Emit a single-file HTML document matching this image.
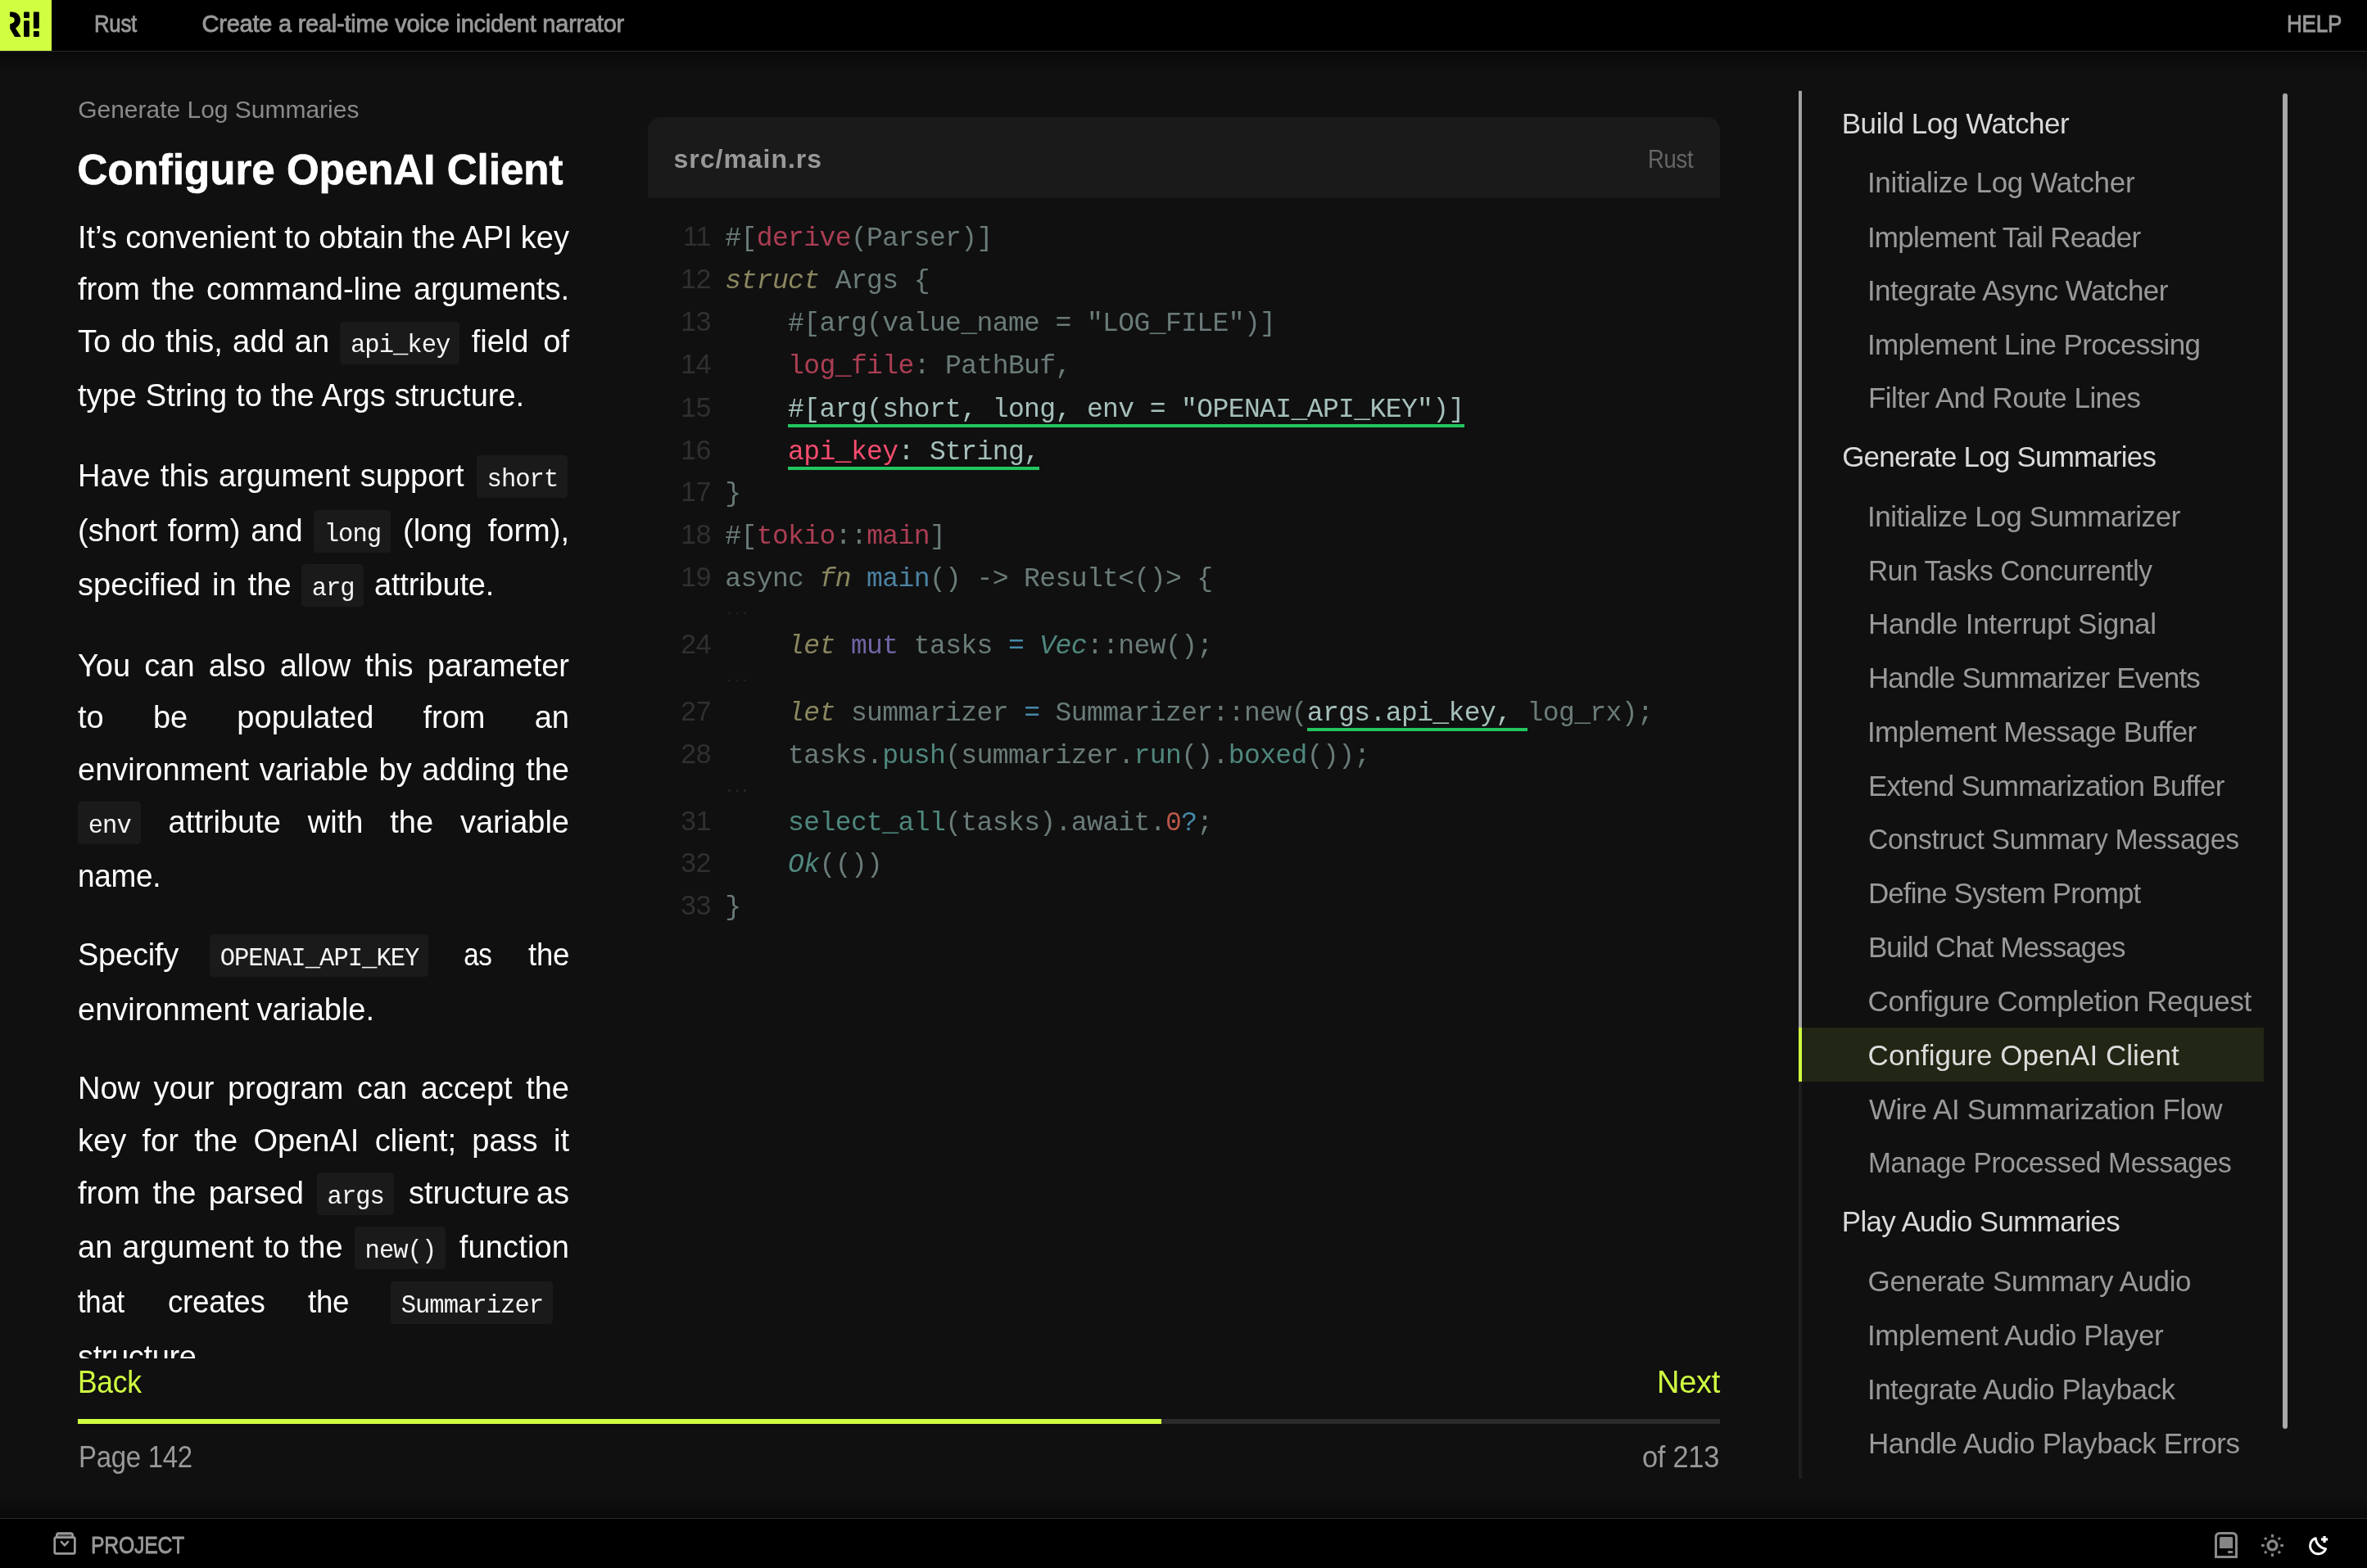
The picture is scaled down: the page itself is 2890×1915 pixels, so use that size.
<!DOCTYPE html>
<html><head><meta charset="utf-8"><title>Configure OpenAI Client</title>
<style>
html,body{margin:0;padding:0;}
body{width:2890px;height:1915px;overflow:hidden;background:#101010;font-family:"Liberation Sans", sans-serif;position:relative;}
#root{position:absolute;left:0;top:0;width:2890px;height:1915px;will-change:transform;}
.t{position:absolute;white-space:pre;}
#hdr{position:absolute;left:0;top:0;width:2890px;height:62px;background:#000;border-bottom:1px solid #2b2b2b;}
#logo{position:absolute;left:0;top:0;width:63px;height:62px;background:#d0ff41;}
#ftr{position:absolute;left:0;top:1854px;width:2890px;height:61px;background:#000;border-top:1px solid #2b2b2b;box-sizing:border-box;}
.bt{position:absolute;white-space:pre;font-size:38px;line-height:38px;color:#fff;}
.ic{position:absolute;box-sizing:border-box;height:52px;font-family:"Liberation Mono", monospace;font-size:30.5px;line-height:33px;padding:13.9px 0 0 0.96px;letter-spacing:-0.963px;text-align:center;background:#1a1a1a;border-radius:4.5px;color:#f4f4f4;white-space:pre;}
#clip{position:absolute;left:0;top:0;width:760px;height:1659px;overflow:hidden;}
#chead{position:absolute;left:791px;top:143px;width:1309px;height:98.8px;background:#1a1a1a;border-radius:16px 16px 0 0;}
.cl{position:absolute;left:885.3px;white-space:pre;font-family:"Liberation Mono", monospace;font-size:33px;line-height:52px;height:52px;letter-spacing:-0.603px;}
.ln{position:absolute;left:818.5px;width:50px;text-align:right;font-size:33.5px;line-height:52px;height:52px;color:#303030;}
.hl{padding-bottom:3px;background:linear-gradient(#22c55e,#22c55e) no-repeat left bottom/100% 4px;}
.el{position:absolute;left:889px;width:24px;height:3px;}
.el i{position:absolute;top:0.2px;width:2.6px;height:2.6px;border-radius:1px;background:#242424;}
.el i:nth-child(1){left:0} .el i:nth-child(2){left:9.5px} .el i:nth-child(3){left:19px}
#sbl{position:absolute;left:2196px;top:111px;width:4.3px;height:1695px;background:#1e1e1e;}
#sbl2{position:absolute;left:2196px;top:111px;width:4.3px;height:1144px;background:#a2a2a2;}
#act{position:absolute;left:2196px;top:1255px;width:568px;height:66px;background:#222614;border-left:4.3px solid #d0ff41;box-sizing:border-box;}
#scr{position:absolute;left:2787px;top:114px;width:6.4px;height:1631px;background:#a8a8a8;border-radius:3.2px;}
#g1{position:absolute;left:0;top:63px;width:2890px;height:26px;background:linear-gradient(rgba(0,0,0,.38),rgba(0,0,0,0));}
#g2{position:absolute;left:0;top:1828px;width:2890px;height:26px;background:linear-gradient(rgba(0,0,0,0),rgba(0,0,0,.38));}
#pt{position:absolute;left:95px;top:1733px;width:2005px;height:6px;background:#2a2a2a;}
#pf{position:absolute;left:95px;top:1733px;width:1323px;height:6px;background:#d0ff41;}
</style></head><body><div id="root">
<div id="hdr"><div id="logo"></div><svg id="logosvg" width="63" height="62" viewBox="0 0 63 62" style="position:absolute;left:0;top:0"><g fill="#000">
<path d="M12 15.3 Q12 14.5 12.8 14.5 L14 14.5 C20.5 14.5 24.9 18.6 24.9 24.5 C24.9 28.8 22.6 32.3 19 34.5 L25.3 44.3 Q25.7 45.1 24.8 45.1 L18.6 45.1 Q18 45.1 17.7 44.6 L12.2 34.9 L12.2 29.9 Q12.2 29.3 12.8 29.1 C15.8 28.4 17.75 26.9 17.75 24.5 C17.75 22 15.8 20.6 12.8 20.6 Q12 20.6 12 19.8 Z"/>
<rect x="29.06" y="14.5" width="6.85" height="7.5" rx="1"/>
<rect x="29.06" y="25.3" width="6.85" height="19.8" rx="1"/>
<rect x="40.9" y="14.5" width="6.9" height="20.2" rx="1"/>
<rect x="40.9" y="38" width="6.9" height="7.1" rx="1"/>
</g></svg></div>
<div id="clip">
<div class="bt" style="left:95.00px;top:270.80px;word-spacing:-0.227px;">It’s convenient to obtain the API key</div>
<div class="bt" style="left:95.00px;top:334.40px;word-spacing:3.583px;">from the command-line arguments.</div>
<div class="bt" style="left:95.00px;top:398.40px;word-spacing:1.758px;">To do this, add an</div>
<div class="ic" style="left:415.30px;top:392.50px;width:145.78px">api_key</div>
<div class="bt" style="left:575.70px;top:398.40px;word-spacing:7.331px;">field of</div>
<div class="bt" style="left:95.00px;top:464.20px;word-spacing:0.466px;">type String to the Args structure.</div>
<div class="bt" style="left:95.00px;top:561.60px;word-spacing:1.582px;">Have this argument support</div>
<div class="ic" style="left:581.90px;top:555.70px;width:111.10px">short</div>
<div class="bt" style="left:95.00px;top:628.60px;word-spacing:2.161px;">(short form) and</div>
<div class="ic" style="left:383.10px;top:622.70px;width:93.76px">long</div>
<div class="bt" style="left:492.00px;top:628.60px;word-spacing:8.719px;">(long form),</div>
<div class="bt" style="left:95.00px;top:694.90px;word-spacing:3.567px;">specified in the</div>
<div class="ic" style="left:368.00px;top:689.00px;width:76.42px">arg</div>
<div class="bt" style="left:457.00px;top:694.90px;letter-spacing:-0.169px;">attribute.</div>
<div class="bt" style="left:95.00px;top:793.60px;word-spacing:6.638px;">You can also allow this parameter</div>
<div class="bt" style="left:95.00px;top:857.10px;word-spacing:49.648px;">to be populated from an</div>
<div class="bt" style="left:95.00px;top:920.70px;word-spacing:2.125px;">environment variable by adding the</div>
<div class="ic" style="left:95.10px;top:978.90px;width:76.42px">env</div>
<div class="bt" style="left:205.60px;top:984.80px;word-spacing:22.316px;">attribute with the variable</div>
<div class="bt" style="left:95.00px;top:1051.30px;letter-spacing:-0.300px;transform:scaleX(0.9703);transform-origin:2.00px 0;">name.</div>
<div class="bt" style="left:95.00px;top:1147.10px;letter-spacing:-0.238px;">Specify</div>
<div class="ic" style="left:256.00px;top:1141.20px;width:267.16px">OPENAI_API_KEY</div>
<div class="bt" style="left:566.00px;top:1147.10px;letter-spacing:-0.300px;transform:scaleX(0.8721);transform-origin:1.00px 0;">as</div>
<div class="bt" style="left:644.60px;top:1147.10px;letter-spacing:-0.300px;transform:scaleX(0.9642);transform-origin:0.00px 0;">the</div>
<div class="bt" style="left:95.00px;top:1214.10px;word-spacing:-1.255px;">environment variable.</div>
<div class="bt" style="left:95.00px;top:1309.90px;word-spacing:5.944px;">Now your program can accept the</div>
<div class="bt" style="left:95.00px;top:1374.30px;word-spacing:8.823px;">key for the OpenAI client; pass it</div>
<div class="bt" style="left:95.00px;top:1437.80px;word-spacing:4.897px;">from the parsed</div>
<div class="ic" style="left:386.90px;top:1431.90px;width:93.76px">args</div>
<div class="bt" style="left:499.00px;top:1437.80px;letter-spacing:-0.003px;word-spacing:-2.500px;">structure as</div>
<div class="bt" style="left:95.00px;top:1504.00px;word-spacing:1.545px;">an argument to the</div>
<div class="ic" style="left:432.90px;top:1498.10px;width:111.10px">new()</div>
<div class="bt" style="left:560.80px;top:1504.00px;letter-spacing:0.158px;">function</div>
<div class="bt" style="left:95.00px;top:1570.90px;letter-spacing:-0.300px;transform:scaleX(0.9137);transform-origin:0.00px 0;">that</div>
<div class="bt" style="left:205.00px;top:1570.90px;letter-spacing:-0.300px;transform:scaleX(0.9667);transform-origin:1.00px 0;">creates</div>
<div class="bt" style="left:375.60px;top:1570.90px;letter-spacing:-0.300px;transform:scaleX(0.9668);transform-origin:0.00px 0;">the</div>
<div class="ic" style="left:477.00px;top:1565.00px;width:197.80px">Summarizer</div>
<div class="bt" style="left:95.00px;top:1637.80px;letter-spacing:-0.370px;">structure.</div>
</div>
<div id="chead"></div>
<div class="cl" style="top:266.30px"><span style="color:#6a7b79;">#[</span><span style="color:#ab3e54;">derive</span><span style="color:#6a7b79;">(Parser)]</span></div>
<div class="ln" style="top:263.30px">11</div>
<div class="cl" style="top:318.30px"><span style="color:#8a865f;font-style:italic;">struct</span><span style="color:#6a7b79;"> Args {</span></div>
<div class="ln" style="top:315.30px">12</div>
<div class="cl" style="top:370.20px"><span style="color:#6a7b79;">    #[arg(value_name = &quot;LOG_FILE&quot;)]</span></div>
<div class="ln" style="top:367.20px">13</div>
<div class="cl" style="top:422.40px"><span style="color:#6a7b79;">    </span><span style="color:#ab3e54;">log_file</span><span style="color:#6a7b79;">: PathBuf,</span></div>
<div class="ln" style="top:419.40px">14</div>
<div class="cl" style="top:474.50px"><span style="color:#6a7b79;">    </span><span class="hl"><span style="color:#a6c0bc;">#[arg(short, long, env = &quot;OPENAI_API_KEY&quot;)]</span></span></div>
<div class="ln" style="top:471.50px">15</div>
<div class="cl" style="top:526.50px"><span style="color:#6a7b79;">    </span><span class="hl"><span style="color:#f54c6e;">api_key</span><span style="color:#a6c0bc;">: String,</span></span></div>
<div class="ln" style="top:523.50px">16</div>
<div class="cl" style="top:578.10px"><span style="color:#6a7b79;">}</span></div>
<div class="ln" style="top:575.10px">17</div>
<div class="cl" style="top:630.30px"><span style="color:#6a7b79;">#[</span><span style="color:#ab3e54;">tokio</span><span style="color:#6a7b79;">::</span><span style="color:#ab3e54;">main</span><span style="color:#6a7b79;">]</span></div>
<div class="ln" style="top:627.30px">18</div>
<div class="cl" style="top:682.30px"><span style="color:#6a7b79;">async </span><span style="color:#8a865f;font-style:italic;">fn</span><span style="color:#6a7b79;"> </span><span style="color:#4c83a2;">main</span><span style="color:#6a7b79;">() -&gt; Result&lt;()&gt; {</span></div>
<div class="ln" style="top:679.30px">19</div>
<div class="cl" style="top:764.00px"><span style="color:#6a7b79;">    </span><span style="color:#8a865f;font-style:italic;">let</span><span style="color:#6a7b79;"> </span><span style="color:#7164a4;">mut</span><span style="color:#6a7b79;"> tasks </span><span style="color:#4689a8;">=</span><span style="color:#6a7b79;"> </span><span style="color:#50877e;font-style:italic;">Vec</span><span style="color:#6a7b79;">::new();</span></div>
<div class="ln" style="top:761.00px">24</div>
<div class="cl" style="top:845.90px"><span style="color:#6a7b79;">    </span><span style="color:#8a865f;font-style:italic;">let</span><span style="color:#6a7b79;"> summarizer </span><span style="color:#4689a8;">=</span><span style="color:#6a7b79;"> Summarizer::new(</span><span class="hl"><span style="color:#a6c0bc;">args.api_key, </span></span><span style="color:#6a7b79;">log_rx);</span></div>
<div class="ln" style="top:842.90px">27</div>
<div class="cl" style="top:898.10px"><span style="color:#6a7b79;">    tasks.</span><span style="color:#4f877d;">push</span><span style="color:#6a7b79;">(summarizer.</span><span style="color:#4f877d;">run</span><span style="color:#6a7b79;">().</span><span style="color:#4f877d;">boxed</span><span style="color:#6a7b79;">());</span></div>
<div class="ln" style="top:895.10px">28</div>
<div class="cl" style="top:979.70px"><span style="color:#6a7b79;">    </span><span style="color:#4f877d;">select_all</span><span style="color:#6a7b79;">(tasks).await.</span><span style="color:#b8564a;">0</span><span style="color:#4689a8;">?</span><span style="color:#6a7b79;">;</span></div>
<div class="ln" style="top:976.70px">31</div>
<div class="cl" style="top:1031.30px"><span style="color:#6a7b79;">    </span><span style="color:#50877e;font-style:italic;">Ok</span><span style="color:#6a7b79;">(())</span></div>
<div class="ln" style="top:1028.30px">32</div>
<div class="cl" style="top:1083.30px"><span style="color:#6a7b79;">}</span></div>
<div class="ln" style="top:1080.30px">33</div>
<div class="el" style="top:747.7px"><i></i><i></i><i></i></div>
<div class="el" style="top:829.7px"><i></i><i></i><i></i></div>
<div class="el" style="top:964.1px"><i></i><i></i><i></i></div>
<div id="sbl"></div><div id="sbl2"></div><div id="act"></div><div id="scr"></div>
<div id="pt"></div><div id="pf"></div>
<div id="g1"></div><div id="g2"></div>
<div id="ftr"></div>
<svg width="50" height="46" viewBox="0 0 50 46" style="position:absolute;left:56px;top:1862px" fill="none" stroke="#9a9a9a" stroke-width="2.7" stroke-linejoin="round" stroke-linecap="round">
<rect x="14.6" y="11.8" width="16.8" height="2.6" fill="#444" stroke="none"/>
<path d="M13.3 15.5 V13.2 Q13.3 10.7 15.8 10.7 H30.2 Q32.7 10.7 32.7 13.2 V15.5"/>
<rect x="10.75" y="15.6" width="24.6" height="19.75" rx="1.6"/>
<path d="M18.8 20.9 L22.9 25.4 L27.1 20.9" stroke-width="2.4"/>
</svg>
<svg width="100" height="46" viewBox="0 0 100 46" style="position:absolute;left:2696px;top:1864px">
<path d="M9.5 37.6 V13.5 Q9.5 8.5 14.5 8.5 H29.5 Q34.5 8.5 34.5 13.5 V37.6 Z" fill="none" stroke="#8a8a8a" stroke-width="3"/>
<path d="M14 14.6 Q14 13.1 15.5 13.1 H28.6 Q30.1 13.1 30.1 14.6 V27 H14 Z" fill="#858585"/>
<rect x="24.1" y="30" width="6" height="3" fill="#858585"/>
<g fill="#858585" transform="translate(78.5 23.45)">
<circle r="5.4" fill="none" stroke="#858585" stroke-width="3.4"/>
<rect x="-1.6" y="-13.5" width="3.2" height="3.7"/><rect x="-1.6" y="9.8" width="3.2" height="3.7"/>
<rect x="-13.5" y="-1.6" width="3.7" height="3.2"/><rect x="9.8" y="-1.6" width="3.7" height="3.2"/>
<rect x="-1.55" y="-1.55" width="3.1" height="3.1" transform="translate(-8.35 -8.35) rotate(45)"/>
<rect x="-1.55" y="-1.55" width="3.1" height="3.1" transform="translate(8.35 -8.35) rotate(45)"/>
<rect x="-1.55" y="-1.55" width="3.1" height="3.1" transform="translate(-8.35 8.35) rotate(45)"/>
<rect x="-1.55" y="-1.55" width="3.1" height="3.1" transform="translate(8.35 8.35) rotate(45)"/>
</g></svg>
<svg width="50" height="46" viewBox="0 0 50 46" style="position:absolute;left:2806px;top:1864px">
<path d="M21.2 14.6 A9.85 9.85 0 1 0 33.6 27.6 A14.4 14.4 0 0 1 21.2 14.6 Z" fill="none" stroke="#fff" stroke-width="2.9" stroke-linejoin="round"/>
<rect x="28" y="14.4" width="8.1" height="3.2" fill="#fff"/><rect x="30.4" y="12" width="3.2" height="8.1" fill="#fff"/>
</svg>
<div class="t" style="left:114.52px;top:15.10px;font-size:29px;line-height:29px;letter-spacing:-0.3px;color:#999999;transform:scaleX(0.8891);transform-origin:0 0;-webkit-text-stroke:0.8px #999999;">Rust</div>
<div class="t" style="left:246.50px;top:15.10px;font-size:29px;line-height:29px;letter-spacing:-0.237px;color:#999999;-webkit-text-stroke:0.8px #999999;">Create a real-time voice incident narrator</div>
<div class="t" style="left:2792.20px;top:15.10px;font-size:29px;line-height:29px;letter-spacing:-0.3px;color:#999999;transform:scaleX(0.9004);transform-origin:0 0;-webkit-text-stroke:0.8px #999999;">HELP</div>
<div class="t" style="left:95.20px;top:119.30px;font-size:30px;line-height:30px;letter-spacing:-0.015px;color:#8a8a8a;">Generate Log Summaries</div>
<div class="t" style="left:94.60px;top:181.60px;font-size:51px;line-height:51px;letter-spacing:0.033px;color:#ffffff;font-weight:bold;-webkit-text-stroke:0.7px #ffffff;">Configure OpenAI Client</div>
<div class="t" style="left:822.60px;top:178.30px;font-size:32px;line-height:32px;letter-spacing:0.973px;color:#999999;font-weight:bold;">src/main.rs</div>
<div class="t" style="left:2011.99px;top:177.60px;font-size:32px;line-height:32px;letter-spacing:-0.3px;color:#666666;transform:scaleX(0.8571);transform-origin:0 0;">Rust</div>
<div class="t" style="left:95.21px;top:1668.05px;font-size:39.5px;line-height:39.5px;letter-spacing:-0.3px;color:#d0ff41;transform:scaleX(0.8969);transform-origin:0 0;">Back</div>
<div class="t" style="left:2022.51px;top:1668.05px;font-size:39.5px;line-height:39.5px;letter-spacing:-0.3px;color:#d0ff41;transform:scaleX(0.9632);transform-origin:0 0;">Next</div>
<div class="t" style="left:95.67px;top:1762.40px;font-size:36px;line-height:36px;letter-spacing:-0.3px;color:#999999;transform:scaleX(0.9146);transform-origin:0 0;">Page 142</div>
<div class="t" style="left:2005.24px;top:1762.40px;font-size:36px;line-height:36px;letter-spacing:-0.3px;color:#999999;transform:scaleX(0.9568);transform-origin:0 0;">of 213</div>
<div class="t" style="left:111.25px;top:1871.50px;font-size:30px;line-height:30px;letter-spacing:-0.3px;color:#999999;transform:scaleX(0.8264);transform-origin:0 0;-webkit-text-stroke:0.8px #999999;">PROJECT</div>
<div class="t" style="left:2248.70px;top:132.90px;font-size:35px;line-height:35px;letter-spacing:-0.415px;color:#d9d9d9;">Build Log Watcher</div>
<div class="t" style="left:2279.90px;top:205.20px;font-size:35px;line-height:35px;letter-spacing:-0.317px;color:#999999;">Initialize Log Watcher</div>
<div class="t" style="left:2279.90px;top:271.50px;font-size:35px;line-height:35px;letter-spacing:-0.764px;color:#999999;">Implement Tail Reader</div>
<div class="t" style="left:2279.90px;top:337.40px;font-size:35px;line-height:35px;letter-spacing:-0.570px;color:#999999;">Integrate Async Watcher</div>
<div class="t" style="left:2279.90px;top:402.80px;font-size:35px;line-height:35px;letter-spacing:-0.629px;color:#999999;">Implement Line Processing</div>
<div class="t" style="left:2280.90px;top:468.40px;font-size:35px;line-height:35px;letter-spacing:-0.537px;color:#999999;">Filter And Route Lines</div>
<div class="t" style="left:2249.20px;top:539.90px;font-size:35px;line-height:35px;letter-spacing:-0.808px;color:#d9d9d9;">Generate Log Summaries</div>
<div class="t" style="left:2279.90px;top:613.20px;font-size:35px;line-height:35px;letter-spacing:-0.437px;color:#999999;">Initialize Log Summarizer</div>
<div class="t" style="left:2281.00px;top:678.80px;font-size:35px;line-height:35px;letter-spacing:-0.3px;color:#999999;transform:scaleX(0.9518);transform-origin:0 0;">Run Tasks Concurrently</div>
<div class="t" style="left:2280.90px;top:744.40px;font-size:35px;line-height:35px;letter-spacing:-0.265px;color:#999999;">Handle Interrupt Signal</div>
<div class="t" style="left:2280.90px;top:810.10px;font-size:35px;line-height:35px;letter-spacing:-0.874px;color:#999999;">Handle Summarizer Events</div>
<div class="t" style="left:2279.90px;top:875.90px;font-size:35px;line-height:35px;letter-spacing:-0.668px;color:#999999;">Implement Message Buffer</div>
<div class="t" style="left:2280.90px;top:941.60px;font-size:35px;line-height:35px;letter-spacing:-0.735px;color:#999999;">Extend Summarization Buffer</div>
<div class="t" style="left:2280.64px;top:1007.30px;font-size:35px;line-height:35px;letter-spacing:-0.3px;color:#999999;transform:scaleX(0.9619);transform-origin:0 0;">Construct Summary Messages</div>
<div class="t" style="left:2280.90px;top:1073.00px;font-size:35px;line-height:35px;letter-spacing:-0.884px;color:#999999;">Define System Prompt</div>
<div class="t" style="left:2280.90px;top:1138.80px;font-size:35px;line-height:35px;letter-spacing:-0.896px;color:#999999;">Build Chat Messages</div>
<div class="t" style="left:2280.60px;top:1205.20px;font-size:35px;line-height:35px;letter-spacing:-0.366px;color:#999999;">Configure Completion Request</div>
<div class="t" style="left:2280.60px;top:1271.00px;font-size:35px;line-height:35px;letter-spacing:0.029px;color:#dcdcdc;">Configure OpenAI Client</div>
<div class="t" style="left:2281.90px;top:1336.50px;font-size:35px;line-height:35px;letter-spacing:-0.319px;color:#999999;">Wire AI Summarization Flow</div>
<div class="t" style="left:2280.99px;top:1402.10px;font-size:35px;line-height:35px;letter-spacing:-0.3px;color:#999999;transform:scaleX(0.9573);transform-origin:0 0;">Manage Processed Messages</div>
<div class="t" style="left:2248.70px;top:1474.30px;font-size:35px;line-height:35px;letter-spacing:-0.637px;color:#d9d9d9;">Play Audio Summaries</div>
<div class="t" style="left:2280.60px;top:1546.50px;font-size:35px;line-height:35px;letter-spacing:-0.369px;color:#999999;">Generate Summary Audio</div>
<div class="t" style="left:2279.90px;top:1613.10px;font-size:35px;line-height:35px;letter-spacing:-0.375px;color:#999999;">Implement Audio Player</div>
<div class="t" style="left:2279.90px;top:1679.20px;font-size:35px;line-height:35px;letter-spacing:-0.479px;color:#999999;">Integrate Audio Playback</div>
<div class="t" style="left:2280.90px;top:1744.90px;font-size:35px;line-height:35px;letter-spacing:-0.399px;color:#999999;">Handle Audio Playback Errors</div>
</div></body></html>
